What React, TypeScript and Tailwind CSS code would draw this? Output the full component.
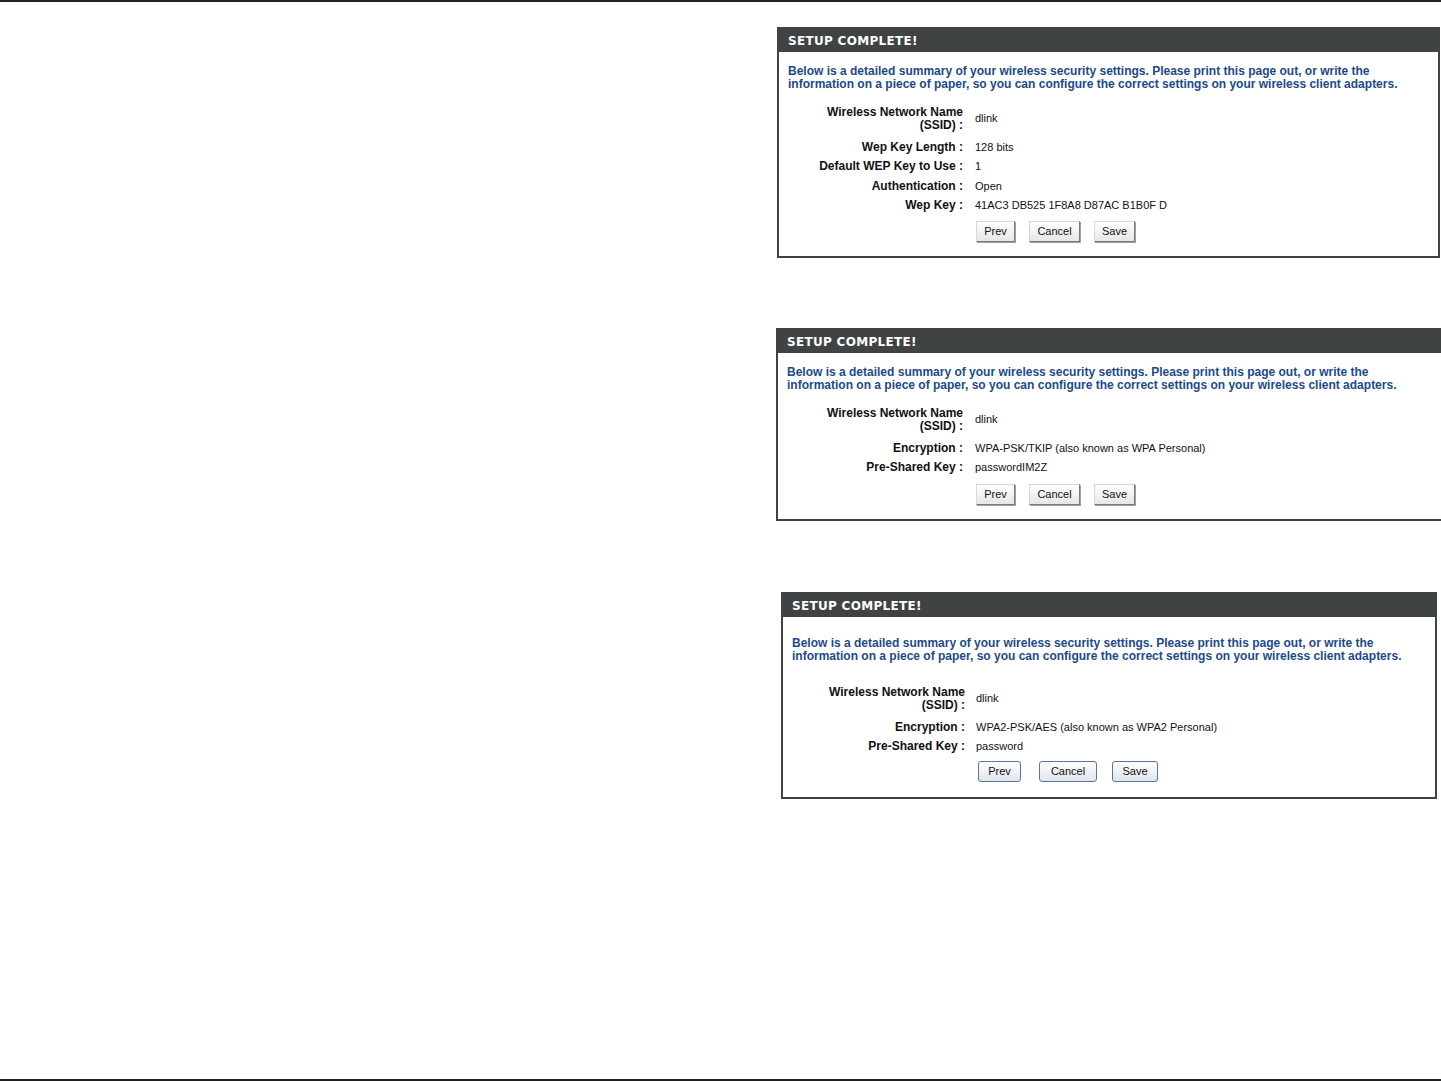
// Setup complete summaries — three wizard result panels

const DESC =
  'Below is a detailed summary of your wireless security settings. Please print this page out, or write the information on a piece of paper, so you can configure the correct settings on your wireless client adapters.';

type Row = { label: string; value: string };

function ClassicButton({ label, w }: { label: string; w: string }) {
  return (
    <button
      className={`${w} h-[21px] text-[11px] text-[#111] bg-gradient-to-b from-white to-[#e6e6e6] border border-t-[#d8d8d8] border-l-[#d8d8d8] border-r-[#7a7a7a] border-b-[#7a7a7a] shadow-[1px_1px_0_#a0a0a0]`}
    >
      {label}
    </button>
  );
}

function RoundButton({ label, w }: { label: string; w: string }) {
  return (
    <button
      className={`${w} h-[21px] text-[11px] text-[#111] rounded-[3px] bg-gradient-to-b from-white to-[#dfe5ec] border border-[#56789c]`}
    >
      {label}
    </button>
  );
}

function Panel({
  rows,
  className,
  labelW,
  gap,
  descTop,
  rowsTop,
  btnTop,
  round,
}: {
  rows: Row[];
  className: string;
  labelW: string;
  gap: string;
  descTop: string;
  rowsTop: string;
  btnTop: string;
  round?: boolean;
}) {
  return (
    <div className={`border-2 border-[#404343] bg-white flex flex-col shrink-0 ${className}`}>
      {/* Header */}
      <div className="h-[23px] bg-[#404343] flex items-center pl-[9px]">
        <span className="text-white font-bold text-[12px] tracking-[0.3px] font-['DejaVu_Sans',sans-serif]">
          SETUP COMPLETE!
        </span>
      </div>

      {/* Description */}
      <p className={`${descTop} pl-[9px] pr-4 text-[12px] leading-[13px] font-bold text-[#1c4a88]`}>{DESC}</p>

      {/* Settings */}
      <div className={`${rowsTop} flex flex-col`}>
        <div className={`h-[37px] flex items-center ${gap}`}>
          <div className={`${labelW} text-right font-bold text-[12px] leading-[13px] text-[#111]`}>
            Wireless Network Name
            <br />
            (SSID) :
          </div>
          <div className="text-[11px] text-[#111]">dlink</div>
        </div>
        {rows.map((r) => (
          <div key={r.label} className={`h-[19.5px] flex items-center ${gap}`}>
            <div className={`${labelW} text-right font-bold text-[12px] text-[#111]`}>{r.label} :</div>
            <div className="text-[11px] text-[#111] whitespace-nowrap">{r.value}</div>
          </div>
        ))}
      </div>

      {/* Buttons */}
      <div className={`${btnTop} flex ${gap}`}>
        <div className={`${labelW}`} />
        {round ? (
          <div className="flex items-center ml-[2px]">
            <RoundButton label="Prev" w="w-[43px]" />
            <div className="w-[18px]" />
            <RoundButton label="Cancel" w="w-[58px]" />
            <div className="w-[15px]" />
            <RoundButton label="Save" w="w-[46px]" />
          </div>
        ) : (
          <div className="flex items-center gap-[14px] ml-[1px]">
            <ClassicButton label="Prev" w="w-[39px]" />
            <ClassicButton label="Cancel" w="w-[51px]" />
            <ClassicButton label="Save" w="w-[41px]" />
          </div>
        )}
      </div>
    </div>
  );
}

export default function App() {
  return (
    <div className="w-[1441px] h-[1081px] bg-white border-t-2 border-b-2 border-[#231f20] overflow-hidden flex flex-col font-['Liberation_Sans',Arial,sans-serif]">
      <Panel
        className="mt-[25px] ml-[777px] w-[663px] h-[231px]"
        labelW="w-[184px]"
        gap="gap-[12px]"
        descTop="mt-[12.5px]"
        rowsTop="mt-[9.5px]"
        btnTop="mt-[5.5px]"
        rows={[
          { label: 'Wep Key Length', value: '128 bits' },
          { label: 'Default WEP Key to Use', value: '1' },
          { label: 'Authentication', value: 'Open' },
          { label: 'Wep Key', value: '41AC3 DB525 1F8A8 D87AC B1B0F D' },
        ]}
      />
      <Panel
        className="mt-[70px] ml-[776px] w-[668px] h-[193px]"
        labelW="w-[185px]"
        gap="gap-[12px]"
        descTop="mt-[12.5px]"
        rowsTop="mt-[9.5px]"
        btnTop="mt-[6.5px]"
        rows={[
          { label: 'Encryption', value: 'WPA-PSK/TKIP (also known as WPA Personal)' },
          { label: 'Pre-Shared Key', value: 'passwordIM2Z' },
        ]}
      />
      <Panel
        className="mt-[71px] ml-[781px] w-[656px] h-[207px]"
        labelW="w-[182px]"
        gap="gap-[11px]"
        descTop="mt-[19.5px]"
        rowsTop="mt-[17.5px]"
        btnTop="mt-[5px]"
        round
        rows={[
          { label: 'Encryption', value: 'WPA2-PSK/AES (also known as WPA2 Personal)' },
          { label: 'Pre-Shared Key', value: 'password' },
        ]}
      />
    </div>
  );
}
